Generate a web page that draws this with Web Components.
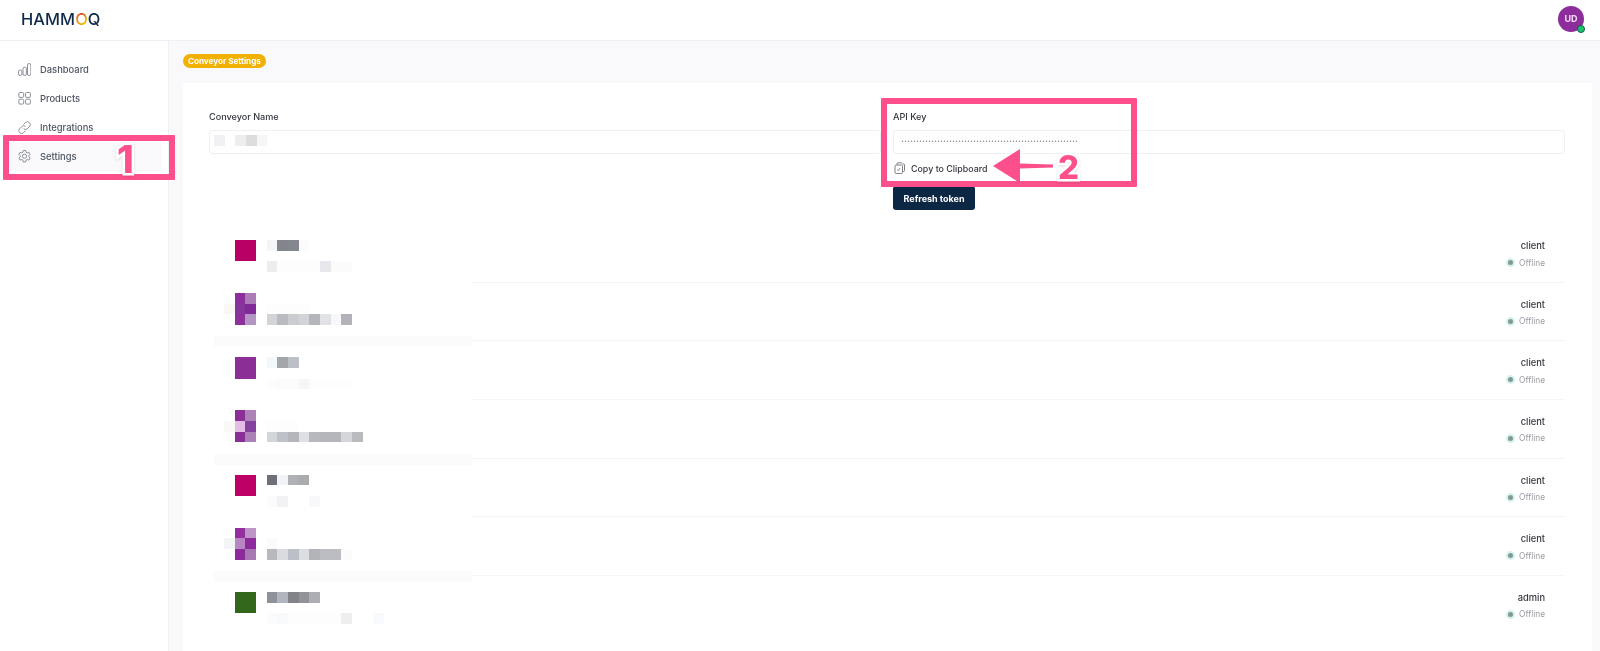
<!DOCTYPE html>
<html lang="en">
<head>
<meta charset="utf-8">
<title>Conveyor Settings</title>
<style>
	html, body { margin: 0; height: 651px; overflow: hidden; background: #fff; font-family: Inter, "Liberation Sans", sans-serif; }
</style>
</head>
<body>
<hammoq-app>
	<app-header slot="header"></app-header>
	<side-nav slot="nav">
		<nav-item icon="chart">Dashboard</nav-item>
		<nav-item icon="grid">Products</nav-item>
		<nav-item icon="link">Integrations</nav-item>
		<nav-item icon="gear" active>Settings</nav-item>
	</side-nav>
	<settings-card slot="main">
		<pixel-block slot="name" cells="f1f1f3 . eeeeee dddddd f6f6f6"></pixel-block>
		<user-row role="client" cells=". b90064 b90064 . f4f5f6 82858c 84878d fbfbfb/. b90064 b90064/. . . . ecedef fdfdfd fdfdfd fdfdfd fdfdfd e8e8ec fbfbfb fbfbfb"></user-row>
		<user-row role="client" cells=". 8c2f9c ab7cb5/faf8f5 86359c 7f2a96 . fdfdfd fdfdfd fdfdfd fdfdfd/. 8e2f9c b495c4 . d3d4d8 babbc0 cbccd0 d3d4d8 b5b6bb e1e2e6 f8f8fa b2b3b8"></user-row>
		<user-row role="client" cells=". 8b2f97 8b2f97 . f3f8fa a5a6aa bcbfc6/. 8b2f97 8b2f97/. . . . fdfdfd fbfbfb fbfbfb f6f6f9 fdfdfd fdfdfd fdfdfd fdfdfd"></user-row>
		<user-row role="client" cells=". 8c2f97 ac82b7/f9f8f4 e4bde6 84429e . fdfdfd fdfdfd fdfdfd/. 8a2f95 ab81b6 . d3d6d9 bfc1c8 b5b6bb dfe0e5 b7b8bd b5b6bb b5b6bb d5d6da b9babe"></user-row>
		<user-row role="client" cells=". be0066 be0066 . 6e7079 f2f3f6 b0b1b5 aaacab/. be0066 be0066/. . . . fafbfd f2f2f5 . . f8f8fb"></user-row>
		<user-row role="client" cells=". 952ea0 bf95c8/f3f4f6 b986c4 8e2a9c . fbfbfb/. 8f2a9a a878b3 . b8b9bc dadbde bcbfc8 dcdde0 b3b4b8 bcbdc2 bcbdc2 fbfbfb"></user-row>
		<user-row role="admin" cells=". 32661a 32661a . 8e919a b2b5bd 818389 929399 adaeb3/. 32661a 32661a/. . . . fbfbfd f8f9fb fdfdfd fdfdfd fdfdfd fdfdfd fdfdfd eeeeee . . f8f9fc"></user-row>
	</settings-card>
	<call-out slot="over" box="3,135,172,45" num="1" numx="117" numy="137" numsize="38"></call-out>
	<call-out slot="over" box="881,98,256,89" num="2" numx="1058" numy="148" numsize="33" arrow></call-out>
</hammoq-app>

<script>
const icons = {
	chart: `<rect x=".5" y="7" width="3.4" height="5.5" rx="1.6"/><rect x="5" y="4.2" width="3.4" height="8.3" rx="1.6"/><rect x="9.5" y=".5" width="3.4" height="12" rx="1.6"/>`,
	grid: `<rect x=".8" y=".5" width="4.9" height="4.9" rx="1.2"/><rect x="7.5" y=".5" width="4.9" height="4.9" rx="1.2"/><rect x=".8" y="7.2" width="4.9" height="4.9" rx="1.2"/><rect x="7.5" y="7.2" width="4.9" height="4.9" rx="1.2"/>`,
	link: `<path d="M5.6 3.4 7.5 1.6a2.6 2.6 0 0 1 3.8 0l.2.2a2.6 2.6 0 0 1 0 3.7L9.3 7.7a2.6 2.6 0 0 1-3.7 0"/><path d="M7.5 5.6a2.6 2.6 0 0 0-3.7 0L1.6 7.8a2.6 2.6 0 0 0 0 3.7l.2.2a2.6 2.6 0 0 0 3.7 0l1.9-1.9"/>`,
	gear: `<path d="M5.3.5h2.400l.4 1.800 1.100.6 1.700-.6 1.200 2-1.300 1.300v1.200l1.300 1.300-1.200 2-1.700-.6-1.100.6-.4 1.800H5.300l-.4-1.800-1.100-.6-1.700.6-1.200-2 1.300-1.300V5.600L.9 4.300l1.200-2 1.700.6 1.100-.6z" stroke-linejoin="round"/><circle cx="6.500" cy="6.200" r="2.100"/>`,
}

customElements.define("hammoq-app", class extends HTMLElement {
	connectedCallback() {
		if (this.shadowRoot) return
		this.attachShadow({mode: "open"}).innerHTML = `
			<style>
				:host {
					display: flex;
					flex-direction: column;
					position: relative;
					height: 651px;
					overflow: hidden;
					background: #f9f9fb;
					filter: blur(.35px);
				}
				.body {
					display: flex;
					flex: 1;
					min-height: 0;
				}
				main {
					display: flex;
					flex-direction: column;
					flex: 1;
					min-width: 0;
					padding: 13px 8px 0 14px;
				}
				.badge {
					align-self: flex-start;
					height: 14px;
					line-height: 14px;
					padding: 0 5px;
					border-radius: 7px;
					background: #f2b100;
					color: #fff;
					font-size: 8.1px;
					font-weight: 700;
					margin-bottom: 15px;
				}
			</style>
			<slot name="header"></slot>
			<div class="body">
				<slot name="nav"></slot>
				<main>
					<span class="badge">Conveyor Settings</span>
					<slot name="main"></slot>
				</main>
			</div>
			<slot name="over"></slot>
		`
	}
})

customElements.define("app-header", class extends HTMLElement {
	connectedCallback() {
		if (this.shadowRoot) return
		this.attachShadow({mode: "open"}).innerHTML = `
			<style>
				:host {
					display: flex;
					flex: none;
					align-items: center;
					justify-content: space-between;
					padding: 0 16px 3px 21px;
					box-sizing: border-box;
					border-bottom: 1px solid #eeeff1;
					height: 41px;
					background: #fff;
				}
				.logo {
					font-size: 16.4px;
					font-weight: 500;
					letter-spacing: .1px;
					color: #0f2a4a;
				}
				.logo b {
					font-weight: 500;
					background: conic-gradient(#d9472b, #f2b100, #f2b100, #e8892b, #d9472b);
					-webkit-background-clip: text;
					background-clip: text;
					color: transparent;
				}
				.avatar {
					position: relative;
					width: 26px;
					height: 26px;
					border-radius: 50%;
					background: #8c2d9b;
					color: #f3dcf6;
					font-size: 9px;
					font-weight: 700;
					display: flex;
					align-items: center;
					justify-content: center;
				}
				.avatar i {
					position: absolute;
					right: -1px;
					bottom: -1px;
					width: 6px;
					height: 6px;
					border-radius: 50%;
					background: #1dc46e;
					border: 1px solid #0d5f4c;
				}
			</style>
			<span class="logo">HAMM<b>O</b>Q</span>
			<span class="avatar">UD<i></i></span>
		`
	}
})

customElements.define("side-nav", class extends HTMLElement {
	connectedCallback() {
		if (this.shadowRoot) return
		this.attachShadow({mode: "open"}).innerHTML = `
			<style>
				:host {
					display: flex;
					flex: none;
					flex-direction: column;
					box-sizing: border-box;
					width: 169px;
					padding: 14px 6px 0 8px;
					background: #fff;
					border-right: 1px solid #f0f1f3;
				}
			</style>
			<slot></slot>
		`
	}
})

customElements.define("nav-item", class extends HTMLElement {
	connectedCallback() {
		if (this.shadowRoot) return
		this.attachShadow({mode: "open"}).innerHTML = `
			<style>
				:host {
					display: flex;
					align-items: center;
					gap: 9px;
					height: 29px;
					padding-left: 10px;
					color: #4d5462;
					font-size: 9.4px;
					font-weight: 500;
				}
				:host([active]) {
					background: #f9f9fc;
				}
				svg {
					width: 13px;
					height: 13px;
					fill: none;
					stroke: #7f838b;
					stroke-width: .9;
				}
			</style>
			<svg viewBox="0 0 13 13">${icons[this.getAttribute("icon")]}</svg>
			<slot></slot>
		`
	}
})

customElements.define("settings-card", class extends HTMLElement {
	connectedCallback() {
		if (this.shadowRoot) return
		this.attachShadow({mode: "open"}).innerHTML = `
			<style>
				:host {
					display: block;
					height: 600px;
					padding: 27px 27px 0 26px;
					background: #fff;
					color: #34373f;
				}
				.form {
					display: grid;
					grid-template-columns: 1fr 1fr;
					gap: 12px;
					margin-bottom: 20px;
				}
				label {
					display: block;
					height: 14px;
					line-height: 14px;
					margin-bottom: 6px;
					font-size: 9.1px;
					font-weight: 500;
				}
				.input {
					box-sizing: border-box;
					height: 24px;
					border: 1px solid #eef0f3;
					border-radius: 3px;
					display: flex;
					align-items: center;
					padding-left: 4px;
					overflow: hidden;
				}
				::slotted(pixel-block) {
					margin-bottom: 3px;
				}
				.key {
					padding-left: 7px;
				}
				.dots {
					font: 5px "Liberation Mono", monospace;
					color: #8b8d93;
					white-space: nowrap;
				}
				.copy {
					display: flex;
					align-items: center;
					gap: 5px;
					height: 12px;
					margin: 8px 0 12px 1px;
					font-size: 8.9px;
					font-weight: 500;
				}
				.copy svg {
					width: 12px;
					height: 12px;
					fill: none;
					stroke: #6f737b;
					stroke-width: .9;
				}
				button {
					display: block;
					height: 24px;
					width: 82px;
					padding: 0;
					border: 0;
					border-radius: 3px;
					background: #0c2744;
					color: #fff;
					font: 700 9px Inter, sans-serif;
				}
			</style>
			<div class="form">
				<div>
					<label>Conveyor Name</label>
					<div class="input"><slot name="name"></slot></div>
				</div>
				<div>
					<label>API Key</label>
					<div class="input key"><span class="dots">${"•".repeat(59)}</span></div>
					<div class="copy">
						<svg viewBox="0 0 12 12">
							<rect x="1" y="3" width="7.500" height="8.500" rx="1.200"/>
							<path d="M3 3V1.800a1 1 0 0 1 1-1h3.500a1 1 0 0 1 1 .6M8.500 2h1a1 1 0 0 1 1 1v5.500a1 1 0 0 1-1 1h-1"/>
							<path d="M3.200 7.500 4.300 8.600 6.200 6"/>
						</svg>
						Copy to Clipboard
					</div>
					<button>Refresh token</button>
				</div>
			</div>
			<slot></slot>
		`
	}
})

customElements.define("pixel-block", class extends HTMLElement {
	connectedCallback() {
		if (this.shadowRoot) return
		const rows = this.getAttribute("cells").split("/")
		const cells = rows.map(row => `<div class="r">` + row.split(" ").map(c =>
			`<i${c == "." ? "" : ` style="background:#${c}"`}></i>`).join("") + `</div>`).join("")
		this.attachShadow({mode: "open"}).innerHTML = `
			<style>
				:host { display: block; }
				.r { display: flex; height: calc(32px / 3); }
				i { flex: none; width: calc(32px / 3); }
			</style>
			${cells}
		`
	}
})

customElements.define("user-row", class extends HTMLElement {
	connectedCallback() {
		if (this.shadowRoot) return
		this.attachShadow({mode: "open"}).innerHTML = `
			<style>
				:host {
					display: block;
				}
				.row {
					display: flex;
					justify-content: space-between;
					height: 47.67px;
					padding: 0 20px 0 15px;
				}
				pixel-block {
					margin-top: 10px;
				}
				:host(:nth-of-type(even)) pixel-block {
					margin-top: 4.5px;
				}
				.meta {
					display: flex;
					flex-direction: column;
					align-items: flex-end;
					padding-top: 10px;
				}
				.role {
					height: 12px;
					line-height: 12px;
					font-size: 9.3px;
					font-weight: 500;
					color: #34373f;
				}
				.status {
					display: flex;
					align-items: center;
					gap: 4px;
					margin-top: 5px;
					height: 11px;
					font-size: 8.3px;
					color: #9b9ca3;
				}
				.status i {
					box-sizing: border-box;
					width: 9px;
					height: 9px;
					border-radius: 50%;
					background: #7f9b98;
					border: 2.500px solid #d6f2ec;
				}
				.sep {
					display: flex;
					height: 11px;
					margin-left: 5px;
				}
				.band {
					width: 258px;
				}
				:host(:nth-of-type(even)) .band {
					background: #fbfbfb;
				}
				.line {
					flex: 1;
					height: 4px;
					border-bottom: 1px solid #f5f5f7;
				}
				:host(:last-child) .sep {
					display: none;
				}
			</style>
			<div class="row">
				<pixel-block cells="${this.getAttribute("cells")}"></pixel-block>
				<div class="meta">
					<span class="role">${this.getAttribute("role")}</span>
					<span class="status"><i></i>Offline</span>
				</div>
			</div>
			<div class="sep"><div class="band"></div><div class="line"></div></div>
		`
	}
})

// pink annotations drawn on top of the page
customElements.define("call-out", class extends HTMLElement {
	connectedCallback() {
		if (this.shadowRoot) return
		const [x, y, w, h] = this.getAttribute("box").split(",")
		const arrow = this.hasAttribute("arrow") ? `
			<svg class="arrow" viewBox="0 0 60 34"><polygon points="0,17 27,0 27,14.500 60,15.500 60,18.500 27,19.500 27,34" fill="#fd4f8b"/></svg>
		` : ""
		this.attachShadow({mode: "open"}).innerHTML = `
			<style>
				:host { display: contents; }
				.box {
					position: absolute;
					left: ${x}px;
					top: ${y}px;
					width: ${w}px;
					height: ${h}px;
					box-sizing: border-box;
					border: 6px solid #fd4f8b;
					border-radius: 1px;
				}
				.num {
					position: absolute;
					left: ${this.getAttribute("numx")}px;
					top: ${this.getAttribute("numy")}px;
					font-size: ${this.getAttribute("numsize")}px;
					line-height: 1.2;
					font-weight: 800;
					color: #fd4f8b;
					-webkit-text-stroke: 5px #fff;
					paint-order: stroke fill;
					filter: drop-shadow(0 1px 1px #0002);
				}
				.arrow {
					position: absolute;
					left: 993px;
					top: 149px;
					width: 60px;
					height: 34px;
				}
			</style>
			<div class="box"></div>
			${arrow}
			<span class="num">${this.getAttribute("num")}</span>
		`
	}
})
</script>
</body>
</html>
